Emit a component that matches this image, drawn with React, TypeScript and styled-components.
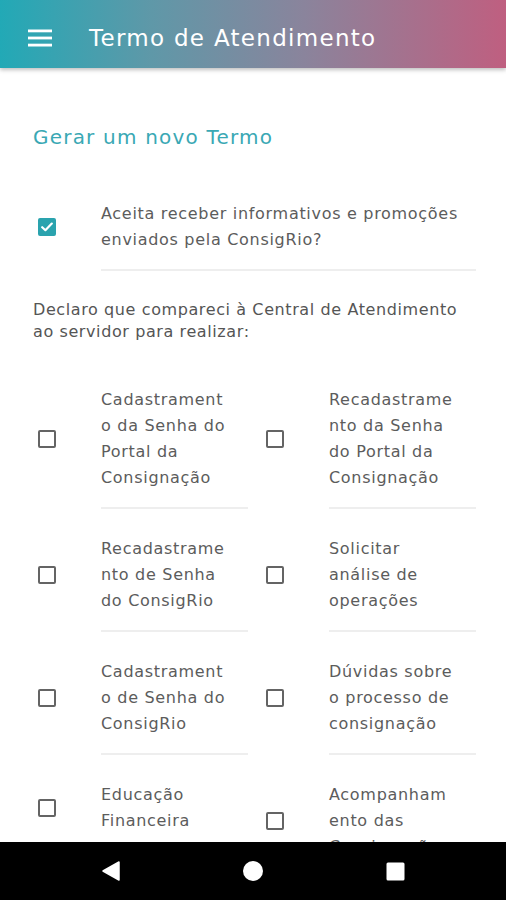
import styled, { createGlobalStyle } from "styled-components";

const GlobalStyle = createGlobalStyle`
  html, body {
    margin: 0;
    padding: 0;
    background: #ffffff;
  }
  body {
    font-family: "DejaVu Sans", "Open Sans", sans-serif;
  }
`;

const Screen = styled.div`
  width: 506px;
  height: 900px;
  display: flex;
  flex-direction: column;
  overflow: hidden;
  background: #ffffff;
`;

const AppBar = styled.header`
  height: 68px;
  box-sizing: border-box;
  padding: 8px 0 0 28px;
  flex-shrink: 0;
  display: flex;
  align-items: center;
  gap: 37px;
  background: linear-gradient(90deg, #22a9b6 0%, #5f98a8 30%, #8a849c 60%, #bf5f80 100%);
  box-shadow: 0 2px 4px rgba(0, 0, 0, 0.25);
  position: relative;
  z-index: 2;
`;

const MenuButton = styled.button`
  width: 24px;
  height: 24px;
  padding: 0;
  border: none;
  background: transparent;
  display: flex;
  align-items: center;
  justify-content: center;
`;

const Title = styled.h1`
  margin: 0;
  color: #ffffff;
  font-size: 23px;
  font-weight: 400;
  letter-spacing: 1.3px;
`;

const Content = styled.main`
  flex: 1;
  overflow: hidden;
  padding: 56px 30px 0 33px;
`;

const SectionTitle = styled.h2`
  margin: 0;
  font-size: 20px;
  line-height: 26px;
  font-weight: 400;
  letter-spacing: 1.2px;
  color: #3aa8b4;
`;

const Option = styled.label`
  display: grid;
  grid-template-columns: 68px 1fr;
  align-items: start;
`;

const BoxCell = styled.div<{ $lines: number }>`
  height: ${(p) => p.$lines * 26}px;
  display: flex;
  align-items: center;
  padding-left: 5px;
`;

const Box = styled.span<{ $checked?: boolean }>`
  width: 18px;
  height: 18px;
  box-sizing: border-box;
  border-radius: 2px;
  border: 2px solid ${(p) => (p.$checked ? "#2aa3ae" : "#646464")};
  background: ${(p) => (p.$checked ? "#2aa3ae" : "transparent")};
  display: flex;
  align-items: center;
  justify-content: center;
`;

const OptionText = styled.div`
  font-size: 16px;
  line-height: 26px;
  letter-spacing: 0.7px;
  color: #5c5c5c;
  padding-bottom: 16px;
  border-bottom: 2px solid #eeeeee;
  white-space: nowrap;
`;

const ConsentBlock = styled.div`
  margin-top: 51px;
`;

const Declaration = styled.p`
  margin: 28px 0 0;
  font-size: 16px;
  line-height: 22px;
  letter-spacing: 0.6px;
  color: #555555;
  white-space: nowrap;
`;

const OptionGrid = styled.div`
  margin-top: 44px;
  display: grid;
  grid-template-columns: 215px 215px;
  column-gap: 13px;
  row-gap: 27px;
`;

const NavBar = styled.nav`
  height: 58px;
  flex-shrink: 0;
  background: #000000;
  display: flex;
  align-items: center;
  justify-content: center;
  gap: 120px;
`;

const NavIcon = styled.span`
  width: 22px;
  height: 22px;
  display: flex;
  align-items: center;
  justify-content: center;
`;

const Check = () => (
  <svg width="12" height="10" viewBox="0 0 12 10">
    <path d="M1.2 5.2 L4.4 8.2 L10.8 1.6" fill="none" stroke="#fff" strokeWidth="2.2" strokeLinecap="round" strokeLinejoin="round" />
  </svg>
);

const Lines = ({ lines }: { lines: string[] }) => (
  <>
    {lines.map((l, i) => (
      <span key={i}>
        {l}
        {i < lines.length - 1 && <br />}
      </span>
    ))}
  </>
);

const CheckOption = ({ lines, checked }: { lines: string[]; checked?: boolean }) => (
  <Option>
    <BoxCell $lines={lines.length}>
      <Box $checked={checked}>{checked && <Check />}</Box>
    </BoxCell>
    <OptionText>
      <Lines lines={lines} />
    </OptionText>
  </Option>
);

const services: string[][] = [
  ["Cadastrament", "o da Senha do", "Portal da", "Consignação"],
  ["Recadastrame", "nto da Senha", "do Portal da", "Consignação"],
  ["Recadastrame", "nto de Senha", "do ConsigRio"],
  ["Solicitar", "análise de", "operações"],
  ["Cadastrament", "o de Senha do", "ConsigRio"],
  ["Dúvidas sobre", "o processo de", "consignação"],
  ["Educação", "Financeira"],
  ["Acompanham", "ento das", "Consignações"],
];

export default function App() {
  return (
    <>
      <GlobalStyle />
      <Screen>
        <AppBar>
          <MenuButton>
            <svg width="24" height="24" viewBox="0 0 24 24">
              <rect x="0" y="3.5" width="24" height="2.8" fill="#fff" />
              <rect x="0" y="10.6" width="24" height="2.8" fill="#fff" />
              <rect x="0" y="17.7" width="24" height="2.8" fill="#fff" />
            </svg>
          </MenuButton>
          <Title>Termo de Atendimento</Title>
        </AppBar>
        <Content>
          <SectionTitle>Gerar um novo Termo</SectionTitle>
          <ConsentBlock>
            <CheckOption checked lines={["Aceita receber informativos e promoções", "enviados pela ConsigRio?"]} />
          </ConsentBlock>
          <Declaration>
            Declaro que compareci à Central de Atendimento
            <br />
            ao servidor para realizar:
          </Declaration>
          <OptionGrid>
            {services.map((s, i) => (
              <CheckOption key={i} lines={s} />
            ))}
          </OptionGrid>
        </Content>
        <NavBar>
          <NavIcon>
            <svg width="18" height="20" viewBox="0 0 18 20">
              <path d="M17 1 L17 19 L1 10 Z" fill="#fff" stroke="#fff" strokeWidth="1.5" strokeLinejoin="round" />
            </svg>
          </NavIcon>
          <NavIcon>
            <svg width="22" height="22" viewBox="0 0 22 22">
              <circle cx="11" cy="11" r="10" fill="#fff" />
            </svg>
          </NavIcon>
          <NavIcon>
            <svg width="19" height="19" viewBox="0 0 19 19">
              <rect x="0.5" y="0.5" width="18" height="18" rx="1.5" fill="#fff" />
            </svg>
          </NavIcon>
        </NavBar>
      </Screen>
    </>
  );
}
